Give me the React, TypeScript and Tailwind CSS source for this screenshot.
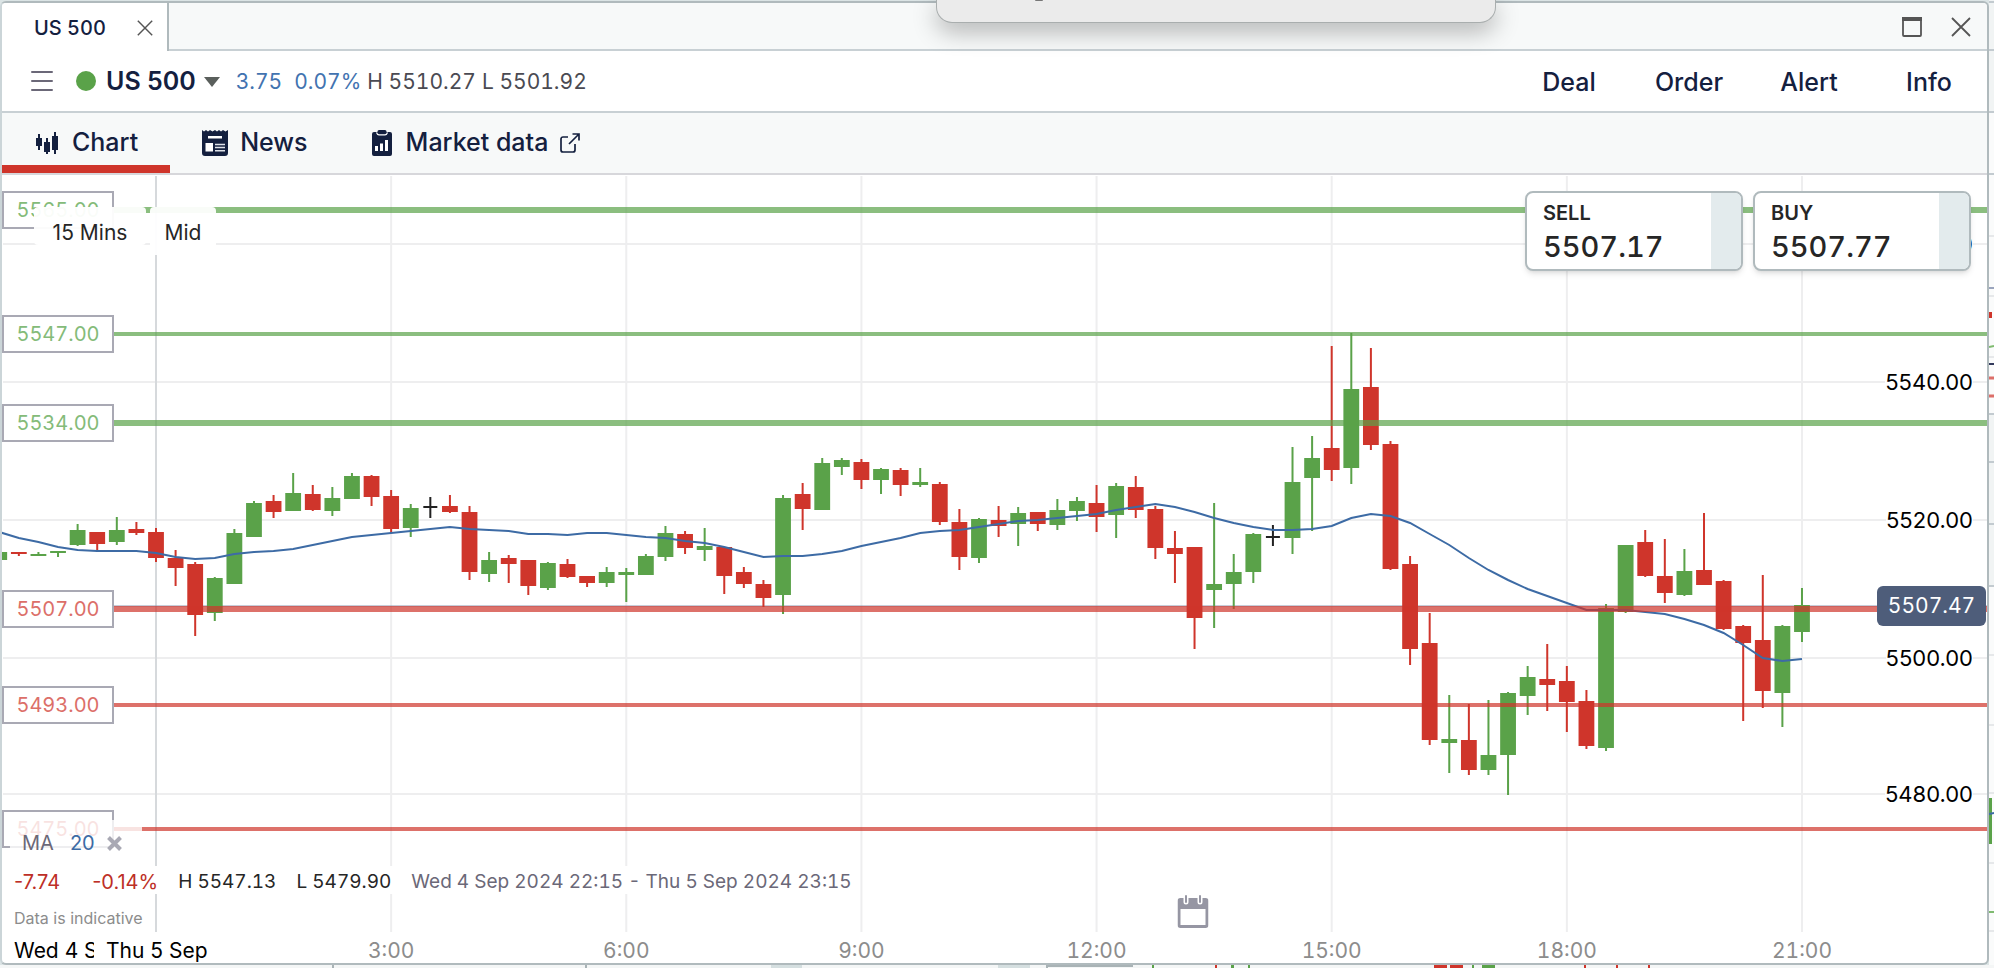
import { useState } from 'react';

type Candle = {
  slot: number;
  high: number;
  top: number;
  bottom: number;
  low: number;
  kind: 'up' | 'down' | 'flat';
};

// Plot space: x 2..1987, y 175..932
const PLOT = { x: 2, y: 175, width: 1985, height: 757 };
const MIDNIGHT_X = 156;
const SLOT = 19.595;

const slotX = (slot: number) => MIDNIGHT_X + slot * SLOT;
const topPct = (y: number) => `${((y - PLOT.y) / PLOT.height) * 100}%`;
const leftPct = (x: number) => `${((x - PLOT.x) / PLOT.width) * 100}%`;

// direction, high, body top, body bottom, low; first entry is 22:00
const series: [string, number, number, number, number][] = [
  ['u', 552, 552, 560, 560],
  ['d', 552, 552, 554, 556],
  ['u', 552, 554, 556, 556],
  ['u', 551, 551, 553, 557],
  ['u', 524, 530, 545, 546],
  ['d', 532, 532, 544, 550],
  ['u', 517, 530, 542, 545],
  ['d', 522, 529, 533, 535],
  ['d', 528, 532, 558, 562],
  ['d', 550, 558, 568, 586],
  ['d', 562, 564, 615, 636],
  ['u', 577, 578, 613, 621],
  ['u', 529, 533, 584, 584],
  ['u', 501, 503, 537, 537],
  ['d', 495, 501, 512, 518],
  ['u', 473, 493, 511, 511],
  ['d', 485, 494, 510, 511],
  ['u', 487, 498, 511, 516],
  ['u', 473, 476, 499, 499],
  ['d', 475, 476, 497, 506],
  ['d', 490, 496, 529, 533],
  ['u', 504, 508, 528, 537],
  ['f', 497, 507, 507, 518],
  ['d', 495, 506, 512, 513],
  ['d', 506, 512, 572, 580],
  ['u', 552, 560, 574, 582],
  ['d', 555, 558, 564, 583],
  ['d', 560, 560, 586, 595],
  ['u', 562, 563, 588, 590],
  ['d', 559, 564, 577, 578],
  ['d', 576, 576, 583, 587],
  ['u', 567, 572, 583, 587],
  ['u', 568, 572, 575, 602],
  ['u', 554, 556, 575, 575],
  ['u', 526, 533, 557, 561],
  ['d', 531, 534, 548, 554],
  ['u', 528, 546, 550, 561],
  ['d', 547, 547, 576, 594],
  ['d', 567, 572, 584, 588],
  ['d', 580, 584, 598, 607],
  ['u', 495, 498, 595, 614],
  ['d', 483, 494, 509, 530],
  ['u', 458, 463, 510, 510],
  ['u', 458, 460, 467, 475],
  ['d', 459, 462, 480, 489],
  ['u', 468, 469, 480, 494],
  ['d', 468, 470, 485, 496],
  ['u', 468, 482, 485, 487],
  ['d', 482, 484, 522, 525],
  ['d', 509, 522, 557, 570],
  ['u', 518, 519, 558, 563],
  ['d', 506, 520, 526, 537],
  ['u', 507, 513, 524, 546],
  ['d', 512, 512, 524, 531],
  ['u', 499, 510, 525, 530],
  ['u', 497, 501, 511, 521],
  ['d', 485, 503, 517, 532],
  ['u', 483, 486, 515, 538],
  ['d', 476, 487, 510, 518],
  ['d', 506, 509, 548, 559],
  ['d', 531, 548, 554, 583],
  ['d', 547, 547, 618, 649],
  ['u', 503, 584, 590, 628],
  ['u', 554, 572, 584, 609],
  ['u', 533, 534, 572, 583],
  ['f', 525, 537, 537, 546],
  ['u', 447, 482, 538, 554],
  ['u', 436, 458, 478, 531],
  ['d', 346, 448, 470, 481],
  ['u', 333, 389, 468, 484],
  ['d', 348, 387, 445, 450],
  ['d', 441, 444, 569, 570],
  ['d', 556, 564, 649, 665],
  ['d', 613, 643, 740, 745],
  ['u', 695, 739, 743, 773],
  ['d', 704, 740, 770, 775],
  ['u', 700, 755, 770, 775],
  ['u', 692, 693, 755, 795],
  ['u', 666, 677, 696, 715],
  ['d', 644, 679, 685, 711],
  ['d', 666, 681, 702, 732],
  ['d', 690, 701, 746, 749],
  ['u', 604, 608, 748, 751],
  ['u', 545, 545, 612, 613],
  ['d', 530, 542, 576, 577],
  ['d', 539, 576, 593, 603],
  ['u', 549, 571, 595, 596],
  ['d', 513, 570, 585, 585],
  ['d', 580, 581, 629, 630],
  ['d', 625, 626, 643, 721],
  ['d', 575, 640, 691, 708],
  ['u', 625, 626, 693, 727],
  ['u', 588, 605, 632, 642],
];

const candles: Candle[] = series.map(([dir, high, top, bottom, low], i) => ({
  slot: i - 8,
  high,
  top,
  bottom,
  low,
  kind: dir === 'u' ? 'up' : dir === 'd' ? 'down' : 'flat',
}));

const movingAverage = [
  532, 538, 542, 547, 550, 551, 551, 551, 553, 557, 559, 558, 554, 552, 551, 549, 545, 541, 537,
  535, 533, 531, 529, 527, 529, 530, 531, 534, 534, 535, 533, 533, 535, 537, 538, 541, 543, 547,
  552, 557, 556, 556, 554, 551, 546, 542, 538, 533, 531, 530, 527, 524, 521, 520, 518, 516, 514,
  510, 507, 504, 507, 512, 518, 523, 527, 530, 530, 529, 526, 518, 514, 516, 523, 534, 545, 558,
  570, 580, 589, 596, 603, 610, 610, 610, 612, 614, 619, 625, 633, 645, 658, 661, 659,
];

const levels = [
  { price: '5565.00', y: 210, weight: 6, side: 'resistance' },
  { price: '5547.00', y: 334, weight: 4, side: 'resistance' },
  { price: '5534.00', y: 423, weight: 6, side: 'resistance' },
  { price: '5507.00', y: 609, weight: 6, side: 'support' },
  { price: '5493.00', y: 705, weight: 4, side: 'support' },
  { price: '5475.00', y: 829, weight: 4, side: 'support' },
];

const priceTicks = [
  { label: '5560.00', y: 244 },
  { label: '5540.00', y: 382 },
  { label: '5520.00', y: 520 },
  { label: '5500.00', y: 658 },
  { label: '5480.00', y: 794 },
];

const timeTicks = [
  { label: '3:00', slot: 12 },
  { label: '6:00', slot: 24 },
  { label: '9:00', slot: 36 },
  { label: '12:00', slot: 48 },
  { label: '15:00', slot: 60 },
  { label: '18:00', slot: 72 },
  { label: '21:00', slot: 84 },
];

const candleColor = { up: '#5aa249', down: '#cf352b', flat: '#222222' };

const CrossIcon = ({ size }: { size: number }) => (
  <svg width={size} height={size} viewBox="0 0 20 20" fill="none" stroke="#555" strokeWidth="1.8">
    <path d="M1 1 19 19M19 1 1 19" />
  </svg>
);

const ChartIcon = () => (
  <svg width="26" height="26" viewBox="-2 0 26 26" fill="#14203f">
    <path d="M0 8h2V4h2v4h2v8H4v4H2v-4H0zM8 12h2V8h2v4h2v10h-2v2h-2v-2H8zM16 6h2V2h2v4h2v14h-2v4h-2v-4h-2z" />
  </svg>
);

const NewsIcon = () => (
  <svg width="26" height="26" viewBox="0 0 26 26">
    <path
      d="M0 0l2 1.5L4 0l2 1.5L8 0l2.500 1.500L13 0l2 1.500L17 0l2 1.500L21 0l2.500 1.500L26 0v23a3 3 0 0 1-3 3H3a3 3 0 0 1-3-3z"
      fill="#14203f"
    />
    <path d="M6 6h14v2.500H6zM3.500 13H11v8.500H3.500z" fill="#fff" />
    <path d="M13 14.500h10M13 17.500h10M13 20.800h10" stroke="#dfe3ea" strokeWidth="1.400" />
  </svg>
);

const MarketIcon = () => (
  <svg width="22" height="26" viewBox="0 0 22 26">
    <path
      d="M2 2h3.500V1.500A1.500 1.500 0 0 1 7 0h6a1.500 1.500 0 0 1 1.500 1.500V2H18a2 2 0 0 1 2 2v20a2 2 0 0 1-2 2H2a2 2 0 0 1-2-2V4a2 2 0 0 1 2-2z"
      fill="#14203f"
    />
    <path d="M4.500 2.500C5 4 5.500 4.800 7 4.800h6c1.500 0 2-.8 2.500-2.300" fill="none" stroke="#fff" strokeWidth="1.200" />
    <path d="M3 16h3v5H3zM8 13.500h3V21H8zM13 10h3v11h-3z" fill="#fff" />
  </svg>
);

const ExternalIcon = () => (
  <svg width="20" height="20" viewBox="0 0 20 20" fill="none" stroke="#14203f" strokeWidth="1.700">
    <path d="M8 4H3a2 2 0 0 0-2 2v11a2 2 0 0 0 2 2h10a2 2 0 0 0 2-2v-6M12.500 1H19v6.500M19 1 9 11" />
  </svg>
);

const CalendarIcon = () => (
  <svg width="31" height="33" viewBox="0 0 31 33">
    <path
      fillRule="evenodd"
      d="M3 3h25a3 3 0 0 1 3 3v24a3 3 0 0 1-3 3H3a3 3 0 0 1-3-3V6a3 3 0 0 1 3-3zM3 14v16h25V14z"
      fill="#9696a3"
    />
    <path d="M8.500 0v7M22.500 0v7" stroke="#fff" strokeWidth="5" strokeLinecap="round" />
    <path d="M8.500 1v6M22.500 1v6" stroke="#9696a3" strokeWidth="2" strokeLinecap="round" />
  </svg>
);

const DealTicket = ({ side, price }: { side: string; price: string }) => (
  <button className="flex h-20 w-[218px] overflow-hidden rounded-lg border-2 border-[#b0babd] bg-white text-left shadow-md">
    <span className="flex flex-1 flex-col pl-4 pt-1.5">
      <span className="text-xl/7 font-semibold text-[#262626]">{side}</span>
      <span className="text-[29px]/10 font-medium tabular-nums text-[#262626]">{price}</span>
    </span>
    <span className="w-[30px] bg-[#e3ebed]" />
  </button>
);

const PriceChart = () => (
  <svg
    className="h-full w-full"
    viewBox={`${PLOT.x} ${PLOT.y} ${PLOT.width} ${PLOT.height}`}
    preserveAspectRatio="none"
    role="img"
    aria-label="US 500 15 minute candles"
  >
    {priceTicks.map((t) => (
      <path key={t.label} d={`M3 ${t.y}H1987`} stroke="#eeeeef" strokeWidth="2" />
    ))}
    {timeTicks.map((t) => (
      <path key={t.label} d={`M${slotX(t.slot)} 176V932`} stroke="#eeeeef" strokeWidth="2" />
    ))}
    <path d={`M${MIDNIGHT_X} 176V932`} stroke="#d6d9dc" strokeWidth="2" />
    <path d="M2 606H1987" stroke="#8f9bb3" strokeWidth="1" />

    {candles.map((c) => {
      const x = slotX(c.slot);
      const color = candleColor[c.kind];
      return (
        <g key={c.slot} fill={color}>
          <rect x={x - 1} y={c.high} width="2" height={c.low - c.high} />
          {c.kind === 'flat' ? (
            <rect x={x - 7} y={c.top - 1} width="14" height="2" />
          ) : (
            <rect x={x - 7.9} y={c.top} width="15.8" height={c.bottom - c.top} />
          )}
        </g>
      );
    })}

    <polyline
      points={movingAverage.map((y, i) => `${slotX(i - 8)},${y}`).join(' ')}
      fill="none"
      stroke="#3d6ba5"
      strokeWidth="2"
    />

    {levels.map((l) => (
      <path
        key={l.price}
        d={`M2 ${l.y}H1987`}
        stroke={l.side === 'resistance' ? '#5aa249' : '#cf352b'}
        strokeOpacity="0.7"
        strokeWidth={l.weight}
      />
    ))}
  </svg>
);

// Slice of the workspace that shows past the right edge of the window
const WorkspaceEdge = () => (
  <svg className="h-full w-[5px]" viewBox="0 0 5 965" preserveAspectRatio="none" aria-hidden="true">
    <path d="M0 0h5v968H0z" fill="#fafbfb" />
    <path d="M0 0h5v112H0zM0 414h5v172H0z" fill="#f1f4f4" />
    <path d="M0 2h5M0 50h5M0 112h5M0 174h5M0 414h5M0 462h5M0 524h5M0 586h5" stroke="#c3cbd0" strokeWidth="2" />
    <path d="M0 236h5M0 296h5M0 357h5M0 655h5M0 725h5M0 793h5M0 863h5M0 931h5" stroke="#e6e8ea" strokeWidth="2" />
    <path d="M0 288h5" stroke="#9aa5bd" strokeWidth="2" />
    <path d="M0 312h3v6H0z" fill="#cf352b" />
    <path d="M0 347l5-1M0 912h5" stroke="#7fbb70" strokeWidth="2" />
    <path d="M0 364h5" stroke="#333a5c" strokeWidth="2" />
    <path d="M0 378h5M0 396h5" stroke="#dc6f69" strokeWidth="3" />
    <path d="M0 798h3v46H0z" fill="#5aa249" />
    <path d="M0 814l5-1" stroke="#3d6ba5" strokeWidth="2" />
  </svg>
);

const WorkspaceFloor = () => (
  <svg className="h-[3px] w-full" viewBox="0 0 1994 3" preserveAspectRatio="none" aria-hidden="true">
    <path d="M0 0h1994v3H0z" fill="#f4f6f6" />
    <path d="M771 0h31v3h-31zM998 0h32v3h-32z" fill="#d5dfe0" />
    <path d="M333 0v3M586 0v3M1047 1h86M1047 0v3" stroke="#a9b3b6" strokeWidth="2" />
    <path d="M1434 0h13v3h-13zM1450 0h13v3h-13zM1584 0h2v3h-2zM1616 0h2v3h-2zM1648 0h2v3h-2zM1215 0h2v3h-2z" fill="#cf352b" />
    <path d="M1482 0h13v3h-13zM1472 0h2v3h-2zM1152 0h2v3h-2zM1231 0h3v3h-3zM1248 0h2v3h-2z" fill="#5aa249" />
  </svg>
);

const App = () => {
  const [tab, setTab] = useState('Chart');

  const tabs = [
    { name: 'Chart', icon: <ChartIcon /> },
    { name: 'News', icon: <NewsIcon /> },
    { name: 'Market data', icon: <MarketIcon />, external: true },
  ];

  return (
    <div className="relative flex h-screen flex-col overflow-hidden bg-[#dbe4e5] font-['Inter',sans-serif] text-[#14203f]">
      <div className="flex min-h-0 flex-1">
        <main className="mt-px flex min-w-0 flex-1 flex-col overflow-hidden rounded-md border-2 border-[#b0babd] border-l-[#cbd5d8] bg-white">
          {/* Title bar */}
          <div className="flex h-12 shrink-0 bg-[#f7f9f9]">
            <div className="flex w-[167px] items-center justify-between border-r-2 border-[#b0babd] bg-white pl-8 pr-3.5 pt-0.5">
              <span className="text-xl font-medium tabular-nums">US 500</span>
              <button aria-label="Close tab">
                <CrossIcon size={16} />
              </button>
            </div>
            <div className="flex flex-1 items-center justify-end gap-7 border-b-2 border-[#c8d0d4] pr-4 pt-0.5">
              <button aria-label="Maximise">
                <svg width="22" height="22" viewBox="0 0 22 22">
                  <rect x="2" y="2" width="18" height="18" rx="1" fill="none" stroke="#555" strokeWidth="1.800" />
                  <path d="M1 1h20v4H1z" fill="#555" />
                </svg>
              </button>
              <button aria-label="Close window">
                <CrossIcon size={20} />
              </button>
            </div>
          </div>

          {/* Instrument summary */}
          <header className="flex h-[62px] shrink-0 items-center border-b-2 border-[#c8d0d4]">
            <button className="ml-7 mr-[22px]" aria-label="Menu">
              <svg width="24" height="20" viewBox="0 0 24 20" stroke="#6b6878" strokeWidth="2" strokeLinecap="round">
                <path d="M2 1h20M2 10h20M2 19h20" />
              </svg>
            </button>
            <span className="mr-2.5 size-5 rounded-full bg-[#5aa249]" />
            <button className="flex items-center gap-2 pt-0.5 text-[25px] font-semibold">
              US 500
              <svg width="16" height="10" viewBox="0 0 16 10" fill="#5a5f5c">
                <path d="M0 0h16L8 10z" />
              </svg>
            </button>
            <p className="ml-4 flex pt-0.5 text-[21px] tabular-nums text-[#4a4a52]">
              <span className="mr-3 text-[#4273b0]">3.75</span>
              <span className="mr-1.5 text-[#4273b0]">0.07%</span>
              <span className="mr-1.5">H 5510.27</span>
              <span>L 5501.92</span>
            </p>
            <div className="ml-auto flex gap-1 pt-1 text-[25px] font-medium">
              <button className="w-[116px]">Deal</button>
              <button className="w-[116px]">Order</button>
              <button className="w-[116px]">Alert</button>
              <button className="w-[116px]">Info</button>
            </div>
          </header>

          {/* Tabs */}
          <nav className="flex h-[62px] shrink-0 border-b-2 border-[#d7d7db] bg-[#f7f9f9] text-[25px] font-medium">
            {tabs.map((t) => (
              <button
                key={t.name}
                onClick={() => setTab(t.name)}
                className={`flex items-center gap-3 border-b-8 px-8 pt-2 ${
                  tab === t.name ? 'border-[#cf352b]' : 'border-transparent'
                }`}
              >
                {t.icon}
                {t.name}
                {t.external && <ExternalIcon />}
              </button>
            ))}
          </nav>

          {/* Chart */}
          <section className="relative min-h-0 flex-1">
            <div className="absolute inset-0">
              <PriceChart />
            </div>

            {levels.map((l) => (
              <span
                key={l.price}
                style={{ top: topPct(l.y) }}
                className={`absolute left-0 flex h-[38px] w-28 -translate-y-1/2 items-center justify-center border-2 border-[#a9a9b4] bg-white text-xl tabular-nums ${
                  l.side === 'resistance' ? 'text-[#84bb79]' : 'text-[#dc6f69]'
                }`}
              >
                {l.price}
              </span>
            ))}

            {priceTicks.map((t) => (
              <span
                key={t.label}
                style={{ top: topPct(t.y) }}
                className="absolute right-3.5 -translate-y-1/2 bg-white text-[22px]/7 text-black"
              >
                {t.label}
              </span>
            ))}
            <span
              style={{ top: topPct(606) }}
              className="absolute right-px flex h-10 w-[109px] -translate-y-1/2 items-center justify-center rounded-md bg-[#4e5d7a] text-[21px] tabular-nums text-white"
            >
              5507.47
            </span>

            <div className="absolute left-8 top-8 flex items-start gap-1 text-[21px]/6 text-[#262626]">
              <button className="h-[38px] w-28 rounded bg-white/95 pt-3.5">15 Mins</button>
              <button className="h-12 w-[66px] rounded bg-white/95 pb-2.5 pt-3.5">Mid</button>
            </div>

            <div className="absolute right-4 top-4 flex gap-2.5">
              <DealTicket side="SELL" price="5507.17" />
              <DealTicket side="BUY" price="5507.77" />
            </div>

            <div className="absolute bottom-0 left-2">
              <div className="flex h-[38px] w-[132px] items-center bg-white/80 pl-3 pt-2 text-xl text-[#6b6878]">
                MA
                <span className="ml-4 text-[#3d6ba5]">20</span>
                <button className="ml-3" aria-label="Remove moving average">
                  <svg width="15" height="15" viewBox="0 0 15 15" stroke="#a9a9b4" strokeWidth="4">
                    <path d="M1.500 1.500l12 12M13.500 1.500l-12 12" />
                  </svg>
                </button>
              </div>
              <p className="mt-2 flex h-7 items-center bg-white pt-1 text-[19px] text-[#262626]">
                <span className="mr-8 pl-1 text-xl text-[#bd2f27]">-7.74</span>
                <span className="mr-5 text-xl text-[#bd2f27]">-0.14%</span>
                <span className="mr-5 tabular-nums">H 5547.13</span>
                <span className="mr-5 tabular-nums">L 5479.90</span>
                <span className="tabular-nums text-[#6b6878]">
                  Wed 4 Sep 2024 22:15 - Thu 5 Sep 2024 23:15
                </span>
              </p>
              <p className="pb-0.5 pl-1 pt-3 text-base/6 text-[#8c8c8c]">Data is indicative</p>
            </div>

            <button
              style={{ left: leftPct(1193) }}
              className="absolute bottom-1 -translate-x-1/2"
              aria-label="Pick date"
            >
              <CalendarIcon />
            </button>
          </section>

          {/* Time axis */}
          <div className="relative flex h-[31px] shrink-0 items-center pl-3 pt-1.5 text-[21px]/6 text-[#8c8c8c]">
            <span className="w-20 overflow-hidden whitespace-nowrap text-black">Wed 4 Sep</span>
            <span className="ml-3 text-black">Thu 5 Sep</span>
            {timeTicks.map((t) => (
              <span
                key={t.label}
                style={{ left: leftPct(slotX(t.slot)) }}
                className="absolute -translate-x-1/2 tabular-nums"
              >
                {t.label}
              </span>
            ))}
          </div>
        </main>
        <WorkspaceEdge />
      </div>
      <WorkspaceFloor />

      {/* Floating panel hanging from the top of the screen */}
      <div className="absolute left-[936px] top-0 h-[23px] w-[560px] rounded-b-2xl border-x border-b border-[#a9aeae] bg-[#ebebeb] shadow-[0_8px_24px_rgba(0,0,0,0.3)]">
        <div className="ml-[98px] h-px w-2 rounded-b bg-[#777]" />
      </div>
    </div>
  );
};

export default App;
